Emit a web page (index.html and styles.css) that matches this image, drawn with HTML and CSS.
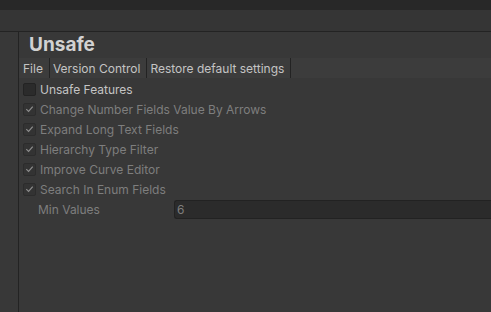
FILE: index.html
```html
<!DOCTYPE html>
<html>
<head>
<meta charset="utf-8">
<link rel="stylesheet" href="styles.css">
</head>
<body>
<div class="topbar"></div>
<div class="tabbar"></div>
<div class="main">
  <div class="side"></div>
  <div class="content">
    <h1 class="title">Unsafe</h1>
    <div class="toolbar">
      <span class="tb-item">File</span>
      <span class="tb-item">Version Control</span>
      <span class="tb-item">Restore default settings</span>
    </div>
    <div class="rows">
      <div class="row">
        <span class="box"></span>
        <span class="label">Unsafe Features</span>
      </div>
      <div class="row disabled">
        <span class="box"><svg viewBox="0 0 12 12" width="12" height="12"><path d="M2.5 6.2 L5 8.6 L9.5 3.4" fill="none" stroke="#8e8e8e" stroke-width="1.3"/></svg></span>
        <span class="label">Change Number Fields Value By Arrows</span>
      </div>
      <div class="row disabled">
        <span class="box"><svg viewBox="0 0 12 12" width="12" height="12"><path d="M2.5 6.2 L5 8.6 L9.5 3.4" fill="none" stroke="#8e8e8e" stroke-width="1.3"/></svg></span>
        <span class="label">Expand Long Text Fields</span>
      </div>
      <div class="row disabled">
        <span class="box"><svg viewBox="0 0 12 12" width="12" height="12"><path d="M2.5 6.2 L5 8.6 L9.5 3.4" fill="none" stroke="#8e8e8e" stroke-width="1.3"/></svg></span>
        <span class="label">Hierarchy Type Filter</span>
      </div>
      <div class="row disabled">
        <span class="box"><svg viewBox="0 0 12 12" width="12" height="12"><path d="M2.5 6.2 L5 8.6 L9.5 3.4" fill="none" stroke="#8e8e8e" stroke-width="1.3"/></svg></span>
        <span class="label">Improve Curve Editor</span>
      </div>
      <div class="row disabled">
        <span class="box"><svg viewBox="0 0 12 12" width="12" height="12"><path d="M2.5 6.2 L5 8.6 L9.5 3.4" fill="none" stroke="#8e8e8e" stroke-width="1.3"/></svg></span>
        <span class="label">Search In Enum Fields</span>
      </div>
      <div class="row disabled field-row">
        <span class="field-label">Min Values</span>
        <span class="field">6</span>
      </div>
    </div>
  </div>
</div>
</body>
</html>
```
FILE: styles.css
```css
* { box-sizing: border-box; }
html, body {
  margin: 0;
  padding: 0;
  width: 491px;
  height: 312px;
  overflow: hidden;
  background: #383838;
  font-family: Inter, "Noto Sans", sans-serif;
  font-size: 12px;
  color: #c4c4c4;
}
.topbar {
  height: 10px;
  background: #282828;
}
.tabbar {
  height: 22px;
  background: #353535;
  border-bottom: 1px solid #232323;
}
.main {
  display: flex;
  height: 280px;
}
.side {
  width: 19px;
  border-right: 1px solid #232323;
  background: #383838;
}
.content {
  flex: 1;
  padding-left: 4px;
  min-width: 0;
}
.title {
  margin: 0;
  padding-left: 6px;
  height: 26px;
  font-size: 19px;
  font-weight: 700;
  line-height: 26px;
  color: #d2d2d2;
}
.toolbar {
  display: flex;
  height: 20px;
  align-items: stretch;
  background: #3c3c3c;
  margin-left: -4px;
  padding-left: 4px;
}
.tb-item {
  display: flex;
  align-items: center;
  padding: 0 6px 0 0;
  border-right: 1px solid #232323;
  margin-right: 3px;
  color: #c4c4c4;
  font-size: 12px;
  white-space: nowrap;
}
.rows {
  padding-top: 1px;
}
.row {
  display: flex;
  align-items: center;
  height: 20px;
  white-space: nowrap;
}
.box {
  width: 13px;
  height: 13px;
  border: 1px solid #232323;
  background: #2b2b2b;
  border-radius: 2px;
  margin-right: 4px;
  display: flex;
  align-items: center;
  justify-content: center;
}
.disabled .box {
  background: #333333;
  border-color: #2c2c2c;
}
.box svg { display: block; }
.label {
  font-size: 12px;
  color: #c4c4c4;
}
.disabled .label, .field-label {
  color: #7e7e7e;
}
.field-label {
  width: 151px;
  padding-left: 15px;
  font-size: 12px;
}
.field {
  flex: 1;
  height: 19px;
  margin-right: -4px;
  background: #2b2b2b;
  border: 1px solid #222222;
  border-right: none;
  border-radius: 3px 0 0 3px;
  padding-left: 2px;
  line-height: 17px;
  color: #7e7e7e;
  font-size: 12px;
}
```
